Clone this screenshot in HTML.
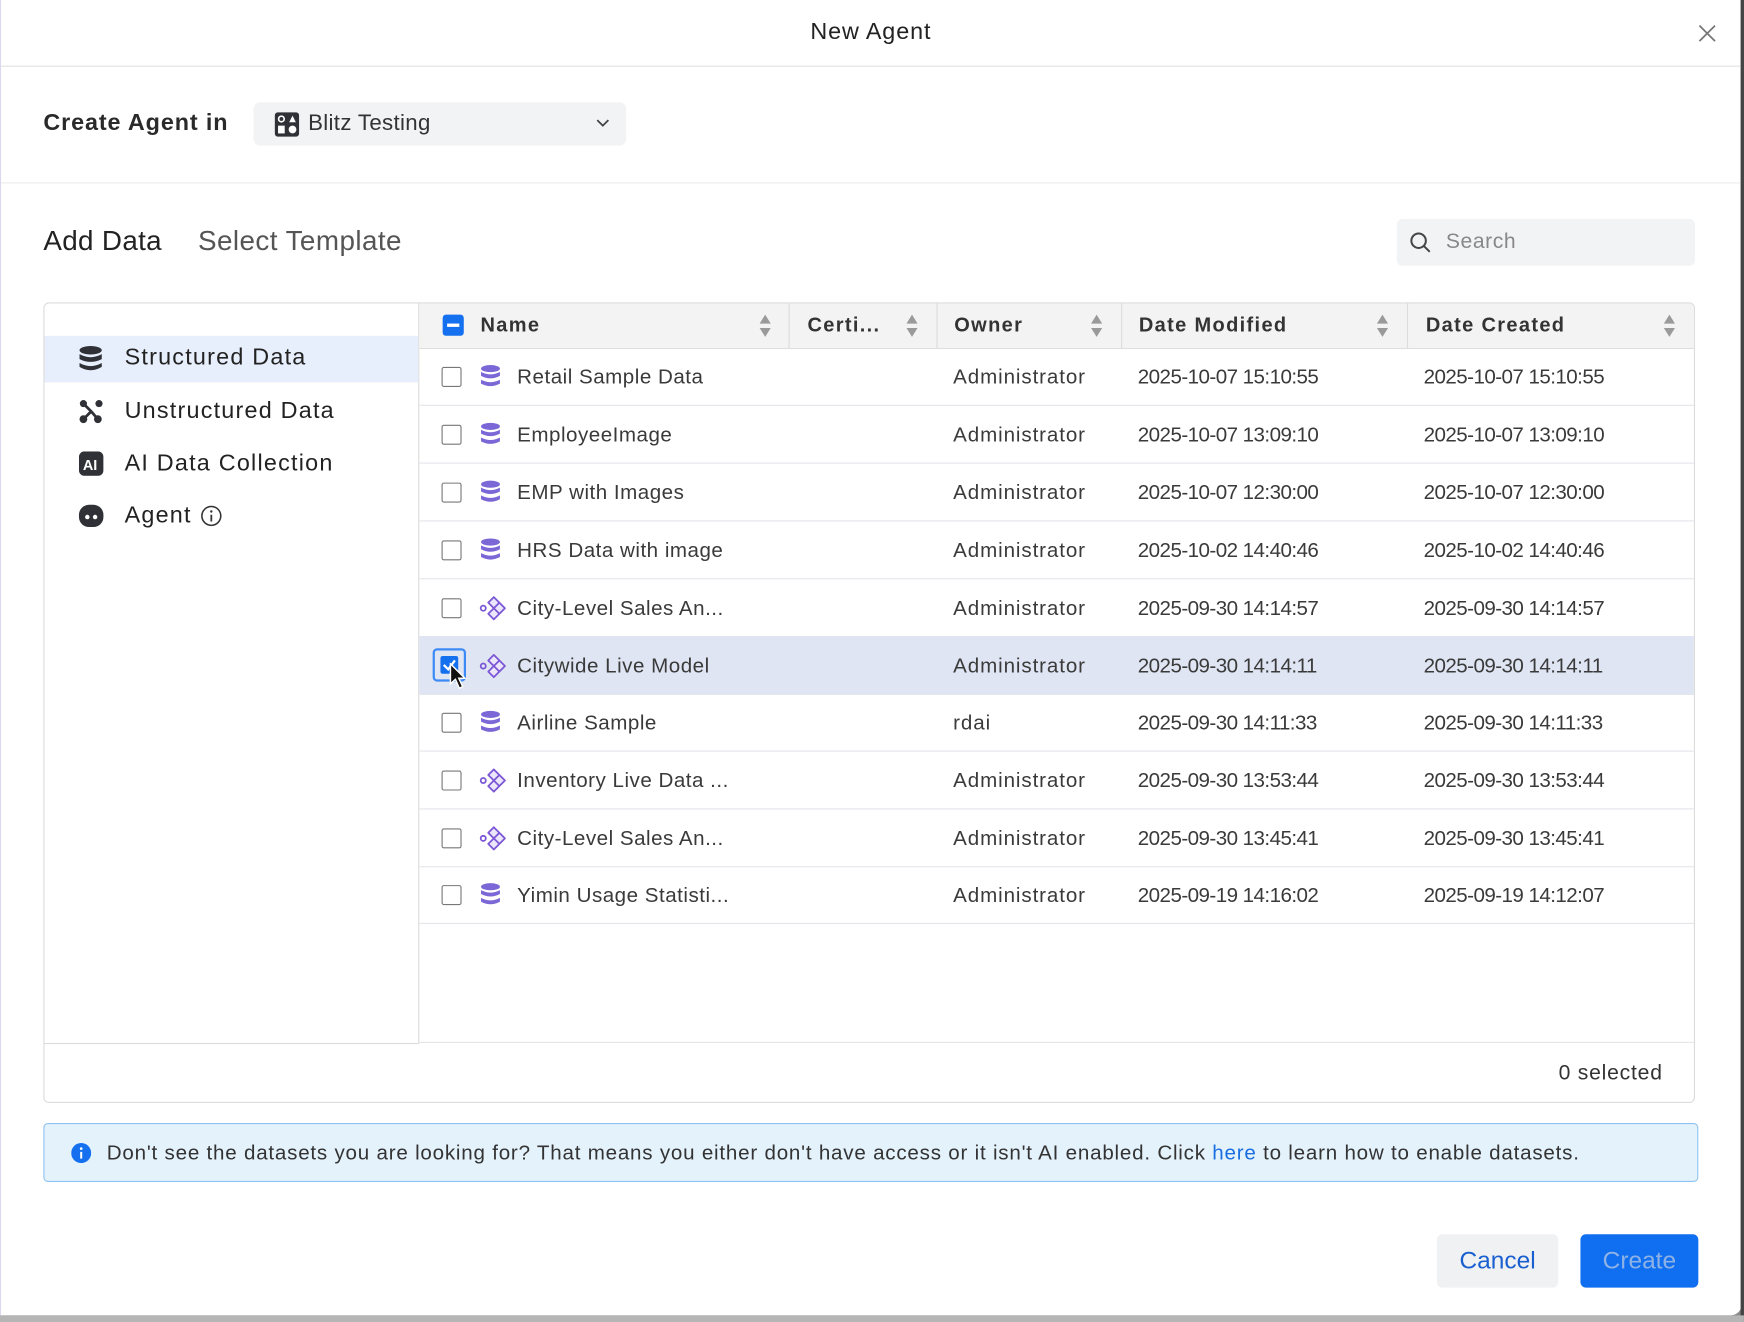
<!DOCTYPE html>
<html><head><meta charset="utf-8"><style>
html,body{margin:0;padding:0;width:1744px;height:1322px;overflow:hidden;background:#8a8a8a;font-family:"Liberation Sans",sans-serif;}
#s{position:absolute;left:0;top:0;width:1568px;height:1189px;transform:scale(1.1122,1.1119);transform-origin:0 0;}
.a{position:absolute;}
#modal{left:0;top:0;width:1565px;height:1183px;background:#fff;border-left:1px solid #d8d8f0;border-radius:0 0 10px 0;}
.t{position:absolute;white-space:nowrap;color:#333;}
.hd{font-weight:bold;font-size:18px;color:#333;top:282px;letter-spacing:1.2px;}
.row{position:absolute;left:377px;width:1146px;height:51px;border-bottom:1px solid #e3e5ea;}
.row .t{top:15px;font-size:18.5px;color:#3a3a3a;letter-spacing:0.45px;}
.row .d{letter-spacing:-0.5px;}
.row .o{letter-spacing:0.8px;}
.cb{position:absolute;left:20px;top:17px;width:16px;height:16px;border:1.5px solid #777;border-radius:2px;background:#fff;}
.ic{position:absolute;left:55px;top:15px;}
.div{position:absolute;top:273px;width:1px;height:40px;background:#dcdcdc;}
.sort{position:absolute;top:282px;width:12px;height:22px;}
.li{position:absolute;left:112px;font-size:21px;color:#222;letter-spacing:1.1px;}
</style></head><body>
<div id="s">
<div class="a" id="modal"></div>
<div class="a" style="left:1565px;top:0;width:3px;height:1189px;background:#444"></div>
<div class="t" style="left:0;width:1566px;text-align:center;top:17px;font-size:21px;color:#222;letter-spacing:0.8px">New Agent</div>
<svg class="a" style="left:1526px;top:21px" width="18" height="18" viewBox="0 0 18 18"><path d="M2 2L16 16M16 2L2 16" stroke="#777" stroke-width="1.6"/></svg>
<div class="a" style="left:1px;top:59px;width:1564px;height:1px;background:#e2e2e2"></div>
<div class="t" style="left:39px;top:99px;font-size:21px;font-weight:bold;color:#2a2a2a;letter-spacing:0.8px">Create Agent in</div>
<div class="a" style="left:228px;top:92px;width:335px;height:39px;background:#f2f3f5;border-radius:6px"></div>
<svg class="a" style="left:247px;top:101px" width="22" height="22" viewBox="0 0 22 22"><rect x="0" y="0" width="22" height="22" rx="3" fill="#2f3136"/><circle cx="6" cy="6" r="2.5" fill="none" stroke="#fff" stroke-width="1.5"/><path d="M13 9L16 3L19 9Z" fill="#fff"/><rect x="3" y="12" width="6" height="7" fill="#fff"/><circle cx="16" cy="15.5" r="3.5" fill="#fff"/></svg>
<div class="t" style="left:277px;top:100px;font-size:20px;color:#333;letter-spacing:0.3px">Blitz Testing</div>
<svg class="a" style="left:536px;top:107px" width="12" height="8" viewBox="0 0 12 8"><path d="M1 1L6 6L11 1" fill="none" stroke="#444" stroke-width="1.6"/></svg>
<div class="a" style="left:1px;top:164px;width:1564px;height:1px;background:#ececec"></div>
<div class="t" style="left:39px;top:203px;font-size:25px;color:#222;letter-spacing:0.3px">Add Data</div>
<div class="t" style="left:178px;top:203px;font-size:25px;color:#555;letter-spacing:0.4px">Select Template</div>
<div class="a" style="left:1256px;top:197px;width:268px;height:42px;background:#f2f3f5;border-radius:5px"></div>
<svg class="a" style="left:1267px;top:208px" width="20" height="20" viewBox="0 0 20 20"><circle cx="8.5" cy="8.5" r="6.5" fill="none" stroke="#444" stroke-width="1.8"/><path d="M13.5 13.5L18.5 18.5" stroke="#444" stroke-width="1.8"/></svg>
<div class="t" style="left:1300px;top:207px;font-size:19px;color:#888;letter-spacing:0.5px">Search</div>

<div class="a" style="left:39px;top:272px;width:1483px;height:718px;border:1px solid #dcdcdc;border-radius:5px"></div>
<div class="a" style="left:40px;top:938px;width:336px;height:1px;background:#dcdcdc"></div>
<div class="a" style="left:376px;top:273px;width:1px;height:666px;background:#dcdcdc"></div>
<div class="a" style="left:377px;top:937px;width:1146px;height:1px;background:#e3e5ea"></div>
<div class="t" style="left:1360px;width:135px;text-align:right;top:955px;font-size:19px;color:#333;letter-spacing:0.7px">0 selected</div>

<div class="a" style="left:40px;top:302px;width:336px;height:42px;background:#e8effc"></div>
<svg class="a" style="left:71px;top:311px" width="21" height="23" viewBox="0 0 21 23"><ellipse cx="10.5" cy="4" rx="10" ry="3.8" fill="#2f3136"/><path d="M0.5 7.5Q10.5 13 20.5 7.5V12Q10.5 17 0.5 12Z" fill="#2f3136"/><path d="M0.5 15.5Q10.5 21 20.5 15.5V19Q10.5 25 0.5 19Z" fill="#2f3136"/></svg>
<div class="li" style="top:310px">Structured Data</div>
<svg class="a" style="left:71px;top:359px" width="22" height="22" viewBox="0 0 22 22"><circle cx="4" cy="4" r="3.2" fill="#2f3136"/><circle cx="18" cy="4" r="3.2" fill="#2f3136"/><circle cx="4" cy="18" r="3.5" fill="#2f3136"/><circle cx="17" cy="18" r="3.5" fill="#2f3136"/><path d="M4 4L11 11L17 18M11 11L4 18" stroke="#2f3136" stroke-width="2.5"/></svg>
<div class="li" style="top:358px">Unstructured Data</div>
<svg class="a" style="left:71px;top:406px" width="22" height="22" viewBox="0 0 22 22"><rect width="22" height="22" rx="5" fill="#2f3136"/><text x="3.5" y="16.5" font-family="Liberation Sans" font-size="13" font-weight="bold" fill="#fff">AI</text></svg>
<div class="li" style="top:405px">AI Data Collection</div>
<svg class="a" style="left:70px;top:453px" width="24" height="22" viewBox="0 0 24 22"><rect x="1" y="1" width="22" height="20" rx="9" fill="#2f3136"/><circle cx="8.5" cy="12" r="2" fill="#fff"/><circle cx="15.5" cy="12" r="2" fill="#fff"/></svg>
<div class="li" style="top:452px">Agent</div>
<svg class="a" style="left:180px;top:454px" width="20" height="20" viewBox="0 0 20 20"><circle cx="10" cy="10" r="8.5" fill="none" stroke="#333" stroke-width="1.4"/><circle cx="10" cy="6" r="1.1" fill="#333"/><path d="M10 9V15" stroke="#333" stroke-width="1.6"/></svg>

<div class="a" style="left:377px;top:273px;width:1146px;height:40px;background:#f3f3f4;border-bottom:1px solid #dedede;border-radius:0 4px 0 0"></div>
<div class="a" style="left:398px;top:283px;width:19px;height:19px;background:#1570ef;border-radius:3px"></div>
<div class="a" style="left:402px;top:291px;width:11px;height:3px;background:#fff"></div>
<div class="t hd" style="left:432px">Name</div>
<div class="t hd" style="left:726px">Certi...</div>
<div class="t hd" style="left:858px">Owner</div>
<div class="t hd" style="left:1024px">Date Modified</div>
<div class="t hd" style="left:1282px">Date Created</div>
<div class="div" style="left:709px"></div><div class="div" style="left:842px"></div><div class="div" style="left:1008px"></div><div class="div" style="left:1265px"></div>
<svg class="sort" style="left:682px" viewBox="0 0 12 22"><path d="M6 1L11 9H1Z M6 21L11 13H1Z" fill="#9a9a9a"/></svg>
<svg class="sort" style="left:814px" viewBox="0 0 12 22"><path d="M6 1L11 9H1Z M6 21L11 13H1Z" fill="#9a9a9a"/></svg>
<svg class="sort" style="left:980px" viewBox="0 0 12 22"><path d="M6 1L11 9H1Z M6 21L11 13H1Z" fill="#9a9a9a"/></svg>
<svg class="sort" style="left:1237px" viewBox="0 0 12 22"><path d="M6 1L11 9H1Z M6 21L11 13H1Z" fill="#9a9a9a"/></svg>
<svg class="sort" style="left:1495px" viewBox="0 0 12 22"><path d="M6 1L11 9H1Z M6 21L11 13H1Z" fill="#9a9a9a"/></svg>

<svg width="0" height="0" style="position:absolute"><defs>
<g id="db"><ellipse cx="9" cy="3.5" rx="8.5" ry="3.2" fill="#7b68d6"/><path d="M0.5 6.5Q9 11 17.5 6.5V10Q9 14.5 0.5 10Z" fill="#7b68d6"/><path d="M0.5 13.5Q9 18 17.5 13.5V17Q9 21.5 0.5 17Z" fill="#7b68d6"/></g>
<g id="dm" fill="#ece6fb" stroke="#7b57d6" stroke-width="1.6" stroke-linejoin="round"><path d="M9 8L14 3L24 13L14 23L9 18L14 13Z"/><path d="M14 13L19 8M14 13L19 18" fill="none"/><circle cx="4.5" cy="13" r="2.3" fill="none"/></g>
</defs></svg>

<div class="row" style="top:313px"><div class="cb"></div><svg class="ic" width="18" height="22"><use href="#db"/></svg><div class="t" style="left:88px">Retail Sample Data</div><div class="t o" style="left:480px">Administrator</div><div class="t d" style="left:646px">2025-10-07 15:10:55</div><div class="t d" style="left:903px">2025-10-07 15:10:55</div></div>
<div class="row" style="top:365px"><div class="cb"></div><svg class="ic" width="18" height="22"><use href="#db"/></svg><div class="t" style="left:88px">EmployeeImage</div><div class="t o" style="left:480px">Administrator</div><div class="t d" style="left:646px">2025-10-07 13:09:10</div><div class="t d" style="left:903px">2025-10-07 13:09:10</div></div>
<div class="row" style="top:417px"><div class="cb"></div><svg class="ic" width="18" height="22"><use href="#db"/></svg><div class="t" style="left:88px">EMP with Images</div><div class="t o" style="left:480px">Administrator</div><div class="t d" style="left:646px">2025-10-07 12:30:00</div><div class="t d" style="left:903px">2025-10-07 12:30:00</div></div>
<div class="row" style="top:469px"><div class="cb"></div><svg class="ic" width="18" height="22"><use href="#db"/></svg><div class="t" style="left:88px">HRS Data with image</div><div class="t o" style="left:480px">Administrator</div><div class="t d" style="left:646px">2025-10-02 14:40:46</div><div class="t d" style="left:903px">2025-10-02 14:40:46</div></div>
<div class="row" style="top:521px"><div class="cb"></div><svg class="ic" style="left:53px;top:13px" width="26" height="26"><use href="#dm"/></svg><div class="t" style="left:88px">City-Level Sales An...</div><div class="t o" style="left:480px">Administrator</div><div class="t d" style="left:646px">2025-09-30 14:14:57</div><div class="t d" style="left:903px">2025-09-30 14:14:57</div></div>
<div class="row" style="top:572px;height:52px;background:#dfe5f3"><div class="a" style="left:12px;top:11px;width:30px;height:30px;border:2px solid #3c8af5;border-radius:4px;box-sizing:border-box"></div><div class="a" style="left:19px;top:18px;width:16px;height:16px;background:#1570ef;border-radius:2px"></div><svg class="a" style="left:20px;top:19px" width="14" height="14"><path d="M2 7L6 11L12 3" fill="none" stroke="#fff" stroke-width="2"/></svg><svg class="a" style="left:27px;top:24px" width="16" height="24" viewBox="0 0 16 24"><path d="M1 1V19L5.5 15L9 23L12 21.5L8.5 14H14Z" fill="#111" stroke="#fff" stroke-width="1.3"/></svg><svg class="ic" style="left:53px;top:14px" width="26" height="26"><use href="#dm"/></svg><div class="t" style="left:88px;top:16px">Citywide Live Model</div><div class="t o" style="left:480px;top:16px">Administrator</div><div class="t d" style="left:646px;top:16px">2025-09-30 14:14:11</div><div class="t d" style="left:903px;top:16px">2025-09-30 14:14:11</div></div>
<div class="row" style="top:624px"><div class="cb"></div><svg class="ic" width="18" height="22"><use href="#db"/></svg><div class="t" style="left:88px">Airline Sample</div><div class="t o" style="left:480px">rdai</div><div class="t d" style="left:646px">2025-09-30 14:11:33</div><div class="t d" style="left:903px">2025-09-30 14:11:33</div></div>
<div class="row" style="top:676px"><div class="cb"></div><svg class="ic" style="left:53px;top:13px" width="26" height="26"><use href="#dm"/></svg><div class="t" style="left:88px">Inventory Live Data ...</div><div class="t o" style="left:480px">Administrator</div><div class="t d" style="left:646px">2025-09-30 13:53:44</div><div class="t d" style="left:903px">2025-09-30 13:53:44</div></div>
<div class="row" style="top:728px"><div class="cb"></div><svg class="ic" style="left:53px;top:13px" width="26" height="26"><use href="#dm"/></svg><div class="t" style="left:88px">City-Level Sales An...</div><div class="t o" style="left:480px">Administrator</div><div class="t d" style="left:646px">2025-09-30 13:45:41</div><div class="t d" style="left:903px">2025-09-30 13:45:41</div></div>
<div class="row" style="top:779px"><div class="cb"></div><svg class="ic" width="18" height="22"><use href="#db"/></svg><div class="t" style="left:88px">Yimin Usage Statisti...</div><div class="t o" style="left:480px">Administrator</div><div class="t d" style="left:646px">2025-09-19 14:16:02</div><div class="t d" style="left:903px">2025-09-19 14:12:07</div></div>

<div class="a" style="left:39px;top:1010px;width:1486px;height:51px;background:#e4f2fc;border:1px solid #8ec4f3;border-radius:4px"></div>
<svg class="a" style="left:64px;top:1028px" width="18" height="18" viewBox="0 0 18 18"><circle cx="9" cy="9" r="9" fill="#1570ef"/><circle cx="9" cy="5" r="1.2" fill="#fff"/><path d="M9 8V14" stroke="#fff" stroke-width="1.8"/></svg>
<div class="t" style="left:96px;top:1026px;font-size:18.5px;color:#333;letter-spacing:0.7px">Don't see the datasets you are looking for? That means you either don't have access or it isn't AI enabled. Click <span style="color:#1a6fe0">here</span> to learn how to enable datasets.</div>

<div class="a" style="left:1292px;top:1110px;width:109px;height:48px;background:#f0f1f3;border-radius:5px"></div>
<div class="t" style="left:1292px;width:109px;text-align:center;top:1121px;font-size:22px;color:#1a5fd0">Cancel</div>
<div class="a" style="left:1421px;top:1110px;width:106px;height:48px;background:#0f6ff0;border-radius:5px"></div>
<div class="t" style="left:1421px;width:106px;text-align:center;top:1121px;font-size:22px;color:#8fb2e6">Create</div>
<div class="a" style="left:0;top:1183px;width:1568px;height:6px;background:#b5b5b5"></div>
</div>
</body></html>
